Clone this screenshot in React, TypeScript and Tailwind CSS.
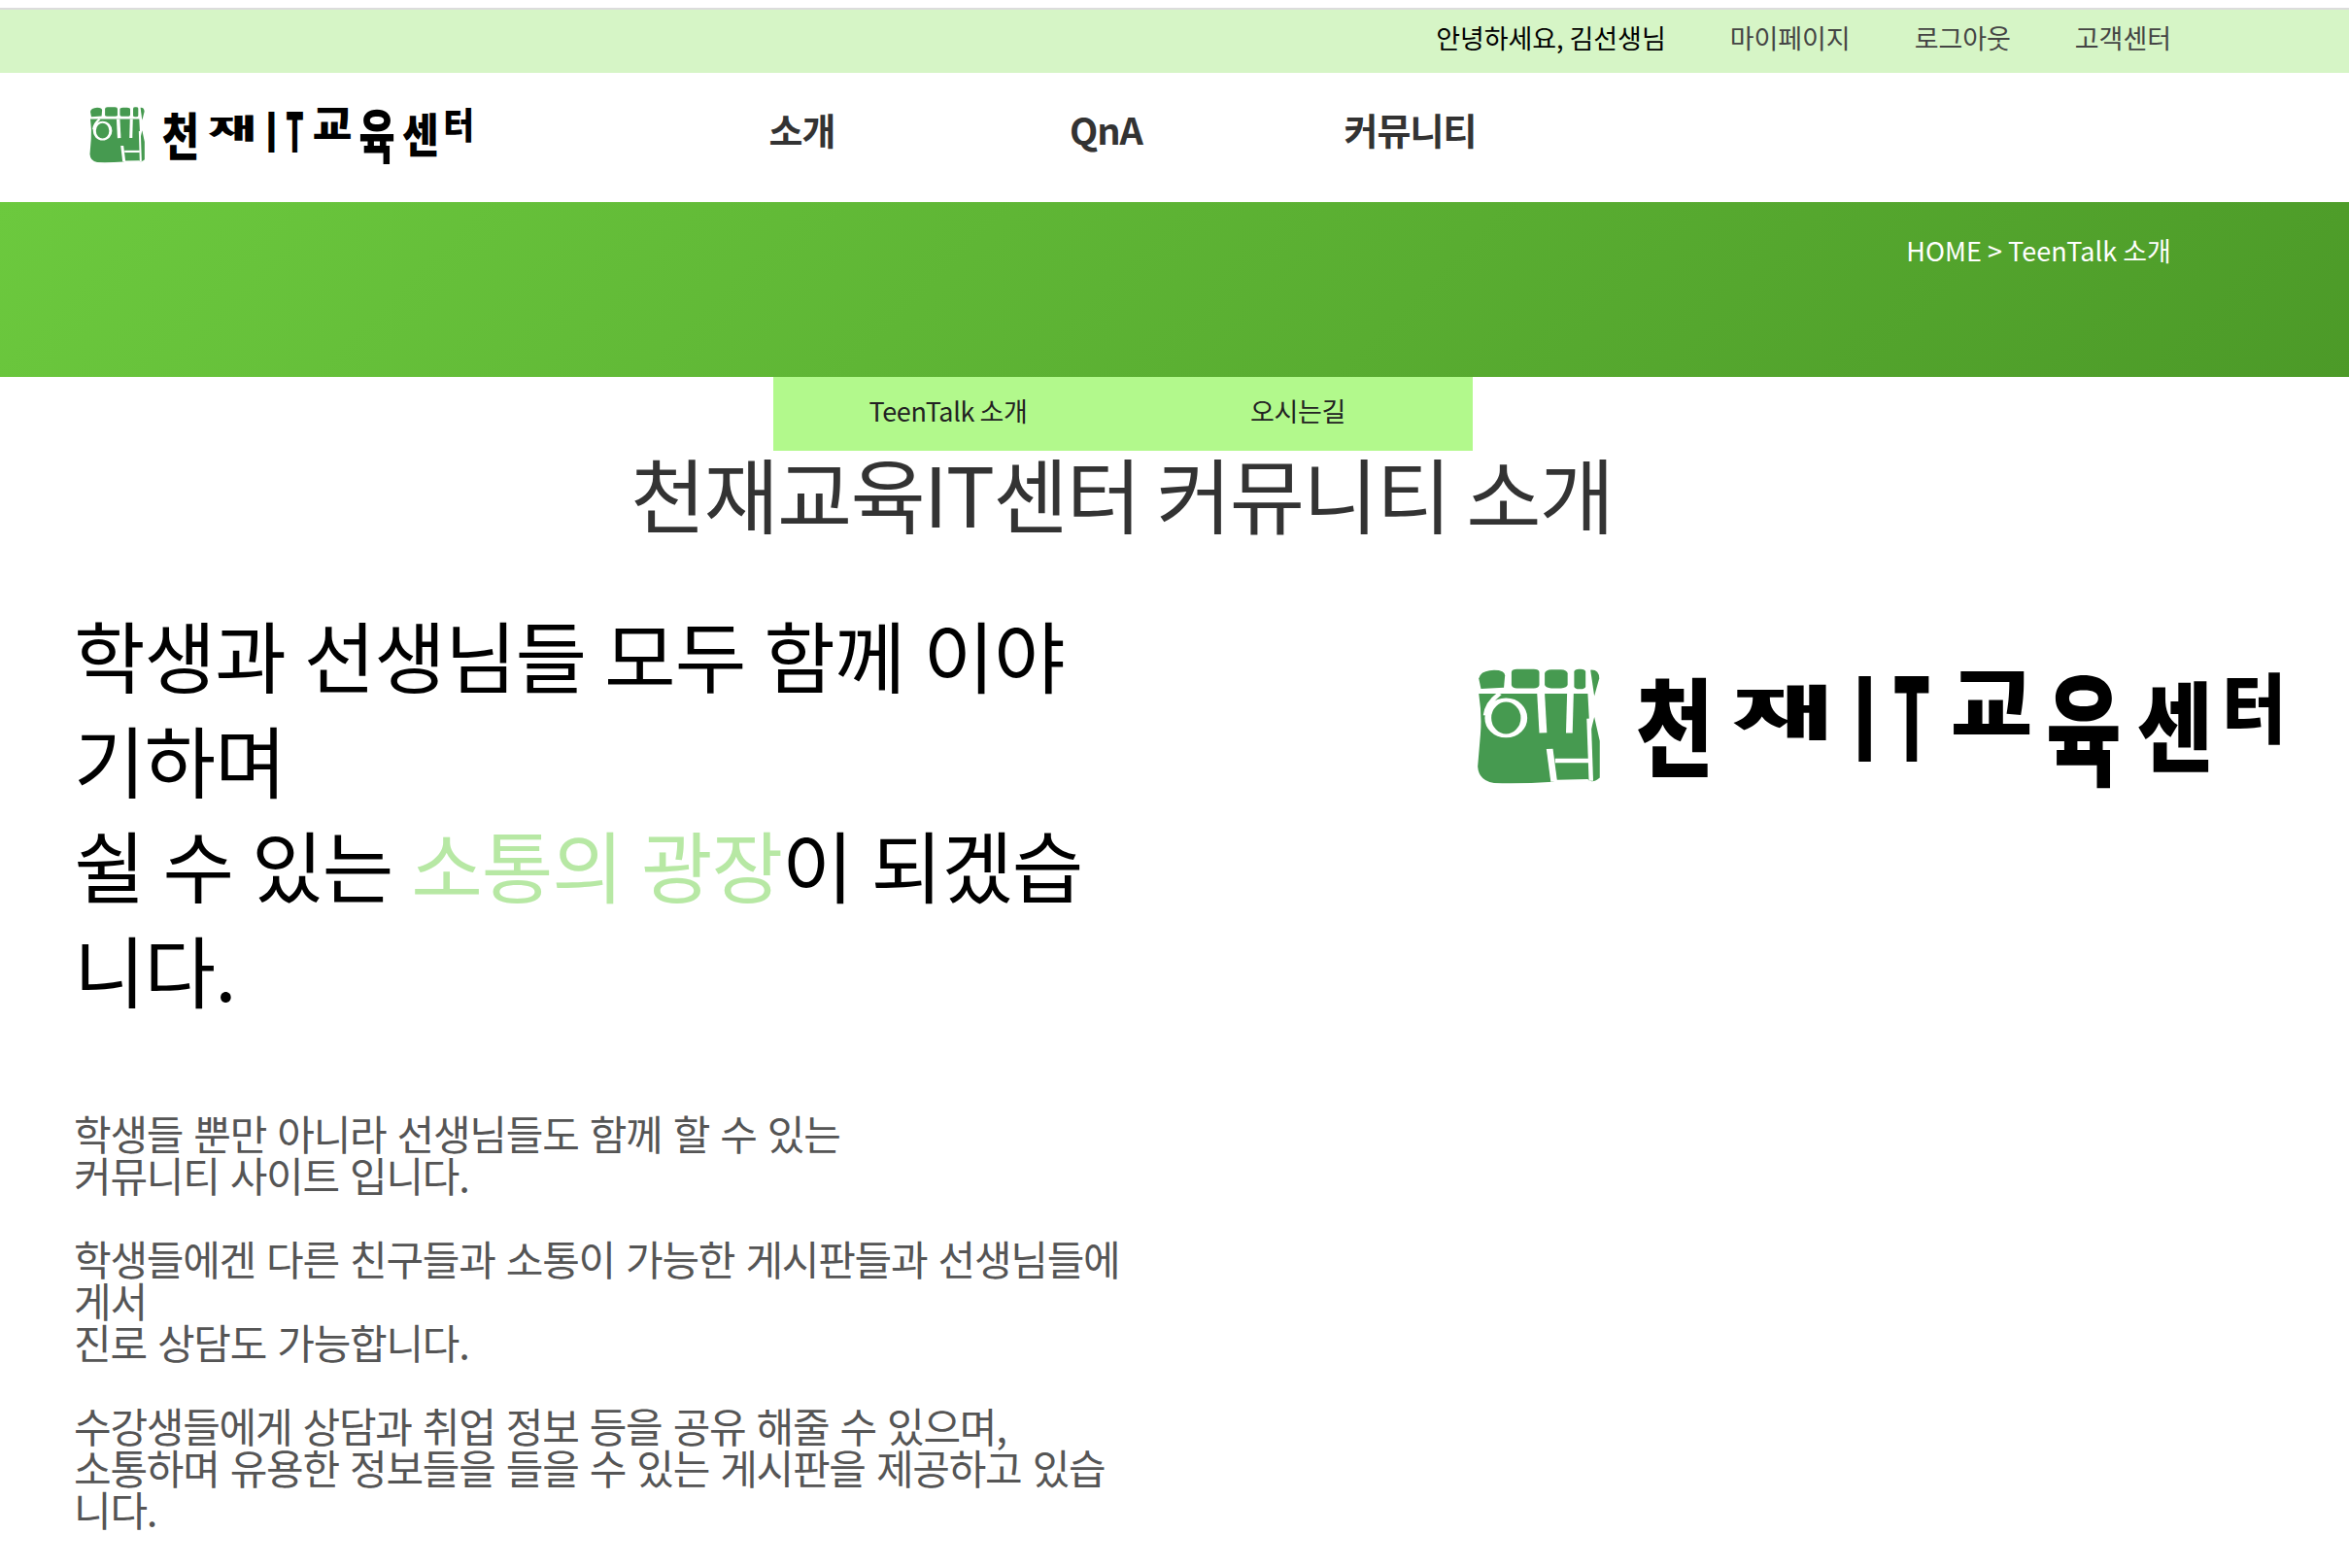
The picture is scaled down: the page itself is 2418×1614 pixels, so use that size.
const kr = { fontFamily: '"Noto Sans CJK KR", "Noto Sans", sans-serif' };

const LogoMark = ({ className }: { className: string }) => (
	<svg viewBox="68 143 230 365" preserveAspectRatio="none" className={className}>
		<g fill="#469a50">
			<path d="M72 175 Q74 150 100 148 Q120 148 120 165 L118 203 L76 207 Z" />
			<rect x="132" y="145" width="51" height="60" rx="10" />
			<rect x="193" y="147" width="42" height="58" rx="12" />
			<rect x="247" y="145" width="21" height="63" rx="9" />
			<path d="M277 148 Q293 146 293 175 L284 230 Z" />
			<path d="M72 222 L272 222 L276 350 L284 295 L294 370 L294 485 Q285 500 275 495 L272 490 L215 492 L208 498 Q150 505 100 502 Q72 495 70 450 L75 350 Q78 290 72 222 Z" />
		</g>
		<g fill="none" stroke="#fff">
			<path d="M186 222 L190 345" strokeWidth="14" />
			<path d="M240 222 L238 345" strokeWidth="12" />
			<path d="M202 395 L210 498" strokeWidth="12" />
			<path d="M212 432 L274 432" strokeWidth="14" />
			<path d="M274 300 L278 495" strokeWidth="8" />
			<path d="M110 222 Q88 250 85 290" strokeWidth="10" />
		</g>
		<ellipse cx="122" cy="298" rx="33" ry="56" fill="#469a50" stroke="#fff" strokeWidth="12" />
	</svg>
);

const LogoGlyph = ({ ch, className, inner }: { ch: string; className: string; inner: string }) => (
	<span className={`flex shrink-0 items-center justify-center leading-none ${className}`}>
		<span className={`inline-block ${inner}`}>{ch}</span>
	</span>
);

// em units, so the same wordmark works in the header and next to the intro text
const LogoText = ({ className }: { className: string }) => (
	<div className={`flex h-[1.21em] items-start font-black text-black ${className}`} style={kr}>
		<LogoGlyph ch="천" className="mt-[.03em] h-[1.06em] w-[.8em]" inner="scale-x-[.87] scale-y-[1.1]" />
		<LogoGlyph ch="재" className="ml-[.2em] mt-[.17em] h-[.49em] w-[1.02em]" inner="scale-x-[1.13] scale-y-[.6]" />
		<LogoGlyph ch="I" className="ml-[.26em] mt-[.02em] h-[.86em] w-[.14em]" inner="scale-x-[.7] scale-y-[1.18]" />
		<LogoGlyph ch="T" className="ml-[.24em] mt-[.02em] h-[.86em] w-[.36em]" inner="scale-x-[.6] scale-y-[1.18]" />
		<LogoGlyph ch="교" className="ml-[.25em] mt-[0em] h-[.63em] w-[.77em]" inner="scale-x-[.92] scale-y-[.85]" />
		<LogoGlyph ch="육" className="ml-[.18em] -mt-[.04em] h-[1.21em] w-[.77em]" inner="scale-x-[.84] scale-y-[1.25]" />
		<LogoGlyph ch="센" className="ml-[.17em] mt-[.06em] h-[.98em] w-[.78em]" inner="scale-x-[.85] scale-y-[1]" />
		<LogoGlyph ch="터" className="ml-[.14em] mt-[.07em] h-[.59em] w-[.55em]" inner="scale-x-[.72] scale-y-[.78]" />
	</div>
);

const TopBar = () => (
	<div className="flex h-[65px] items-center justify-end bg-[#d6f5c6] pb-[7px] pr-[183px] text-[27px] tracking-[-0.05px] text-[#444]">
		<span className="text-black">안녕하세요, 김선생님</span>
		<span className="ml-[66px]">마이페이지</span>
		<span className="ml-[66px]">로그아웃</span>
		<span className="ml-[66px]">고객센터</span>
	</div>
);

const NavBar = () => (
	<div className="flex h-[133px] items-center bg-white pb-[5px]">
		<div className="ml-[92px] flex w-[393px] items-start gap-[17px]">
			<LogoMark className="h-[58px] w-[61px]" />
			<LogoText className="text-[48px]" />
		</div>
		<nav className="ml-[184px] flex w-[940px] pb-[13px] text-[38px] font-semibold tracking-[-1px] text-[#333]">
			<span className="w-[313px] text-center">소개</span>
			<span className="w-[313px] text-center">QnA</span>
			<span className="w-[313px] text-center">커뮤니티</span>
		</nav>
	</div>
);

const Hero = () => (
	<div className="flex h-[180px] items-start justify-end bg-[linear-gradient(135deg,#6cc93e,#4c9a28)] pr-[183px] pt-[32px] text-[27px] leading-[36px] tracking-[0.05px] text-white">
		HOME &gt; TeenTalk 소개
	</div>
);

const Tabs = () => (
	<div className="ml-[796px] flex h-[76px] w-[720px] items-center bg-[#b2f98c] pb-[5px] text-[27px] tracking-[-0.4px] text-[#222]">
		<span className="w-[360px] text-center">TeenTalk 소개</span>
		<span className="w-[360px] text-center">오시는길</span>
	</div>
);

export default function App() {
	return (
		<div className="min-h-[1614px] bg-white" style={kr}>
			<div className="h-2 bg-white" />
			<div className="h-0.5 bg-[#dcdcdc]" />
			<TopBar />
			<NavBar />
			<Hero />
			<Tabs />
			<h1 className="-mt-[3px] ml-[649px] text-[84px] font-normal leading-[92px] tracking-[-1.8px] text-[#333]">
				천재교육IT센터 커뮤니티 소개
			</h1>
			<div className="flex">
				<div className="ml-[76px] w-[1090px] break-all pt-[65px]">
					<h2 className="text-[80px] leading-[108px] tracking-[-1px] text-black [word-spacing:2px]">
						학생과 선생님들 모두 함께 이야기하며
						<br />
						쉴 수 있는 <span className="text-[#b7e8a4]">소통의 광장</span>이
						되겠습니다.
					</h2>
					<div className="mt-[94px] text-[42px] leading-[43px] tracking-[-1.25px] text-[#555] [word-spacing:3px]">
						<p>
							학생들 뿐만 아니라 선생님들도 함께 할 수 있는
							<br />
							커뮤니티 사이트 입니다.
						</p>
						<p className="mt-[43px]">
							학생들에겐 다른 친구들과 소통이 가능한 게시판들과 선생님들에게서
							<br />
							진로 상담도 가능합니다.
						</p>
						<p className="mt-[43px]">
							수강생들에게 상담과 취업 정보 등을 공유 해줄 수 있으며,
							<br />
							소통하며 유용한 정보들을 들을 수 있는 게시판을 제공하고 있습니다.
						</p>
					</div>
				</div>
				<div className="ml-[354px] flex items-start gap-[35px] pt-[135px]">
					<LogoMark className="h-[120px] w-[129px]" />
					<LogoText className="text-[100px]" />
				</div>
			</div>
		</div>
	);
}
